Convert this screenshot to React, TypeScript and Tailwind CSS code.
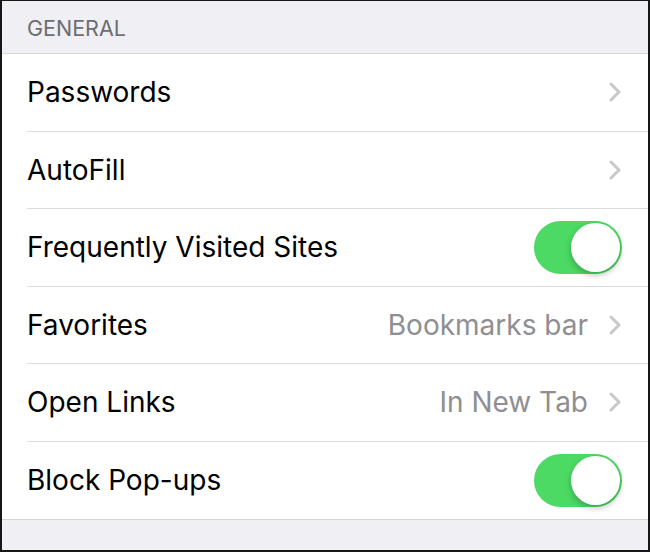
import React from "react";

const font = { fontFamily: 'Inter, "Noto Sans", "Liberation Sans", sans-serif' };

function Chevron() {
  return (
    <svg width="14" height="22" viewBox="0 0 14 22" className="shrink-0">
      <path d="M3 3 L11 11 L3 19" fill="none" stroke="#c7c7cc" strokeWidth="3" strokeLinecap="round" strokeLinejoin="round" />
    </svg>
  );
}

function Toggle() {
  return (
    <div className="relative w-[88px] h-[53px] rounded-full bg-[#4cd964]">
      <div className="absolute right-[2px] top-[2px] w-[49px] h-[49px] rounded-full bg-white shadow-[0_3px_6px_rgba(0,0,0,0.25)]" />
    </div>
  );
}

type Row = { label: string; detail?: string; kind: "chevron" | "toggle" };

const rows: Row[] = [
  { label: "Passwords", kind: "chevron" },
  { label: "AutoFill", kind: "chevron" },
  { label: "Frequently Visited Sites", kind: "toggle" },
  { label: "Favorites", detail: "Bookmarks bar", kind: "chevron" },
  { label: "Open Links", detail: "In New Tab", kind: "chevron" },
  { label: "Block Pop-ups", kind: "toggle" },
];

export default function App() {
  return (
    <div className="w-[650px] h-[552px] bg-[#161616] pt-[1px] pl-[2px] pr-[2px] pb-[2px]" style={font}>
      <div className="w-full h-full bg-[#efeff4] flex flex-col">
        <div className="h-[52px] flex items-center pl-[25px] pt-[2px] text-[21.5px] text-[#6d6d72]">
          GENERAL
        </div>
        <div className="bg-white border-t border-b border-[#d6d6da]">
          {rows.map((r, i) => (
            <div key={r.label} className="h-[77.5px] flex pl-[25px]">
              <div className={`flex-1 flex items-center pr-[26px] ${i < rows.length - 1 ? "border-b border-[#dcdce0]" : ""}`}>
                <span className="flex-1 text-[28px] text-black">{r.label}</span>
                {r.detail && <span className="text-[28px] text-[#8e8e93] mr-[20px]">{r.detail}</span>}
                {r.kind === "chevron" ? <Chevron /> : <Toggle />}
              </div>
            </div>
          ))}
        </div>
      </div>
    </div>
  );
}
